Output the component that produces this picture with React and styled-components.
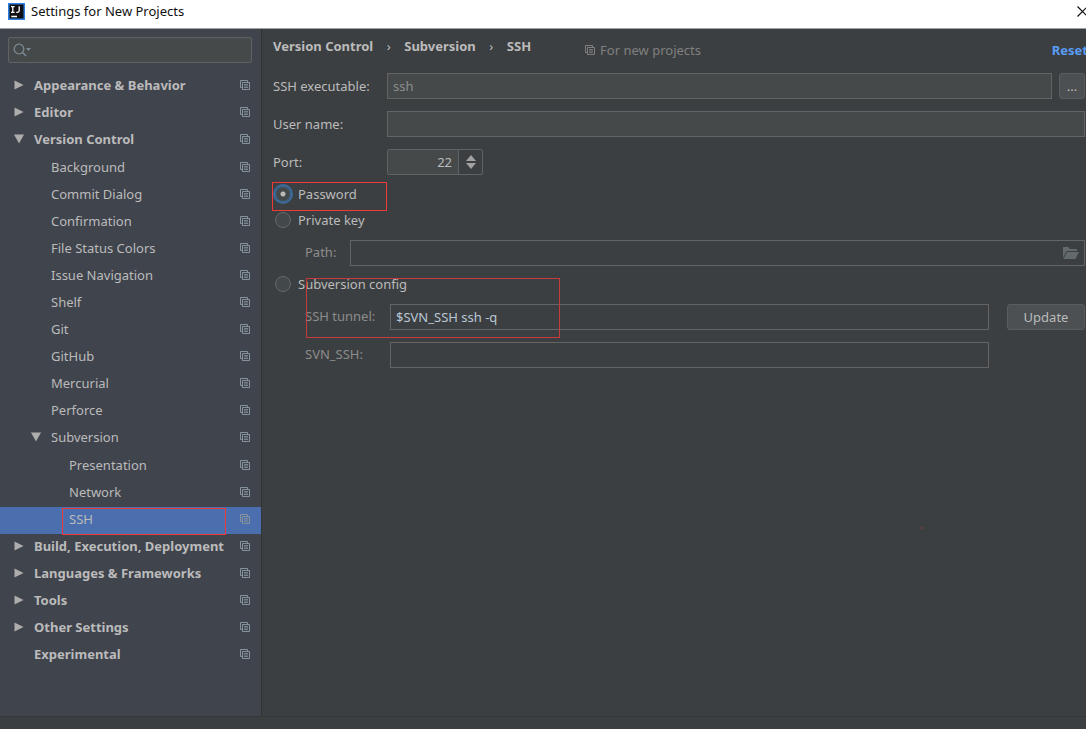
import React, { useState } from 'react';
import styled, { createGlobalStyle, css } from 'styled-components';

// Secciones del árbol de configuración
const tree = [
  { label: 'Appearance & Behavior', children: [] },
  { label: 'Editor', children: [] },
  {
    label: 'Version Control',
    open: true,
    children: [
      { label: 'Background' },
      { label: 'Commit Dialog' },
      { label: 'Confirmation' },
      { label: 'File Status Colors' },
      { label: 'Issue Navigation' },
      { label: 'Shelf' },
      { label: 'Git' },
      { label: 'GitHub' },
      { label: 'Mercurial' },
      { label: 'Perforce' },
      {
        label: 'Subversion',
        open: true,
        children: [
          { label: 'Presentation' },
          { label: 'Network' },
          { label: 'SSH', marked: true },
        ],
      },
    ],
  },
  { label: 'Build, Execution, Deployment', children: [] },
  { label: 'Languages & Frameworks', children: [] },
  { label: 'Tools', children: [] },
  { label: 'Other Settings', children: [] },
  { label: 'Experimental' },
];

function CopyIcon() {
  return (
    <svg width="10" height="10" viewBox="0 0 10 10" fill="none" stroke="currentColor" aria-hidden="true">
      <path d="M2 7.5H.5V.5H7.5V2" />
      <path d="M2.5 2.5H9.5V9.5H2.5Z" />
      <path d="M4 4.5H8M4 6H8M4 7.5H8" strokeWidth="0.8" />
    </svg>
  );
}

function Arrow({ open }) {
  return (
    <svg width="10" height="10" viewBox="0 0 10 10" fill="#adadad" aria-hidden="true">
      <path d={open ? 'M0 .5H10L5 9.5Z' : 'M.5 .5L9.5 5L.5 9.5Z'} />
    </svg>
  );
}

function TreeItem({ item, level, selected, onSelect }) {
  const isSelected = selected === item.label;
  return (
    <li>
      <TreeRow
        type="button"
        $level={level}
        $selected={isSelected}
        onClick={() => onSelect(item.label)}
      >
        <ArrowSlot>{item.children && <Arrow open={item.open} />}</ArrowSlot>
        <TreeLabel>{item.label}</TreeLabel>
        <CopyIcon />
        {item.marked && <RowMark />}
      </TreeRow>
      {item.open && (
        <NestedList>
          {item.children.map((child) => (
            <TreeItem
              key={child.label}
              item={child}
              level={level + 1}
              selected={selected}
              onSelect={onSelect}
            />
          ))}
        </NestedList>
      )}
    </li>
  );
}

function RadioOption({ value, checked, onChange, children }) {
  return (
    <RadioLabel>
      <Radio type="radio" name="auth" value={value} checked={checked} onChange={() => onChange(value)} />
      {children}
    </RadioLabel>
  );
}

export default function App() {
  const [selected, setSelected] = useState('SSH');
  const [auth, setAuth] = useState('password');
  const [port, setPort] = useState(22);

  return (
    <Window>
      <GlobalStyle />
      <TitleBar>
        <svg width="17" height="17" viewBox="0 0 17 17" aria-hidden="true">
          <rect width="17" height="17" fill="#2f7fe0" />
          <rect x="1.5" y="1.5" width="14" height="14" fill="#101014" />
          <path
            d="M3 3.7H6.6M4.8 3.7V9M3 9.3H6.6M11.200 3.200V7.5Q11.200 9.3 9.6 9.3H8.2M3.3 13.5H9"
            fill="none"
            stroke="#fff"
            strokeWidth="1.3"
          />
        </svg>
        <WindowTitle>Settings for New Projects</WindowTitle>
        <CloseButton type="button" aria-label="Close">
          <svg width="11" height="11" viewBox="0 0 11 11" stroke="#111" strokeWidth="1.2">
            <path d="M.5 .5L10.5 10.5M10.5 .5L.5 10.5" />
          </svg>
        </CloseButton>
      </TitleBar>

      <Body>
        <Sidebar>
          <SearchBox>
            <svg width="20" height="14" viewBox="0 0 20 14" fill="none" stroke="#7c8a94" aria-hidden="true">
              <circle cx="6" cy="6" r="4.8" strokeWidth="1.3" />
              <path d="M9.5 9.5L13 13" strokeWidth="1.6" />
              <path d="M13 5H18L15.500 8Z" fill="#7c8a94" stroke="none" />
            </svg>
            <SearchInput type="text" aria-label="Search settings" />
          </SearchBox>
          <TreeList>
            {tree.map((item) => (
              <TreeItem key={item.label} item={item} level={0} selected={selected} onSelect={setSelected} />
            ))}
          </TreeList>
        </Sidebar>

        <Main>
          <Header>
            <Crumbs>
              <span>Version Control</span>
              <Separator>›</Separator>
              <span>Subversion</span>
              <Separator>›</Separator>
              <span>SSH</span>
            </Crumbs>
            <Hint>
              <CopyIcon />
              For new projects
            </Hint>
            <ResetLink href="#reset">Reset</ResetLink>
          </Header>

          <Fields>
            <Field>
              <FieldLabel htmlFor="executable">SSH executable:</FieldLabel>
              <TextInput id="executable" type="text" defaultValue="ssh" $muted />
              <BrowseButton type="button" aria-label="Browse">...</BrowseButton>
            </Field>
            <Field>
              <FieldLabel htmlFor="user">User name:</FieldLabel>
              <TextInput id="user" type="text" />
            </Field>
            <Field>
              <FieldLabel htmlFor="port">Port:</FieldLabel>
              <Spinner>
                <PortInput
                  id="port"
                  type="text"
                  inputMode="numeric"
                  value={port}
                  onChange={(e) => setPort(Number(e.target.value) || 0)}
                />
                <SpinnerButtons>
                  <StepButton type="button" aria-label="Increase port" onClick={() => setPort(port + 1)}>
                    <svg width="10" height="6" viewBox="0 0 10 6" fill="#a2a2a2">
                      <path d="M0 6L5 0L10 6Z" />
                    </svg>
                  </StepButton>
                  <StepButton type="button" aria-label="Decrease port" onClick={() => setPort(port - 1)}>
                    <svg width="10" height="6" viewBox="0 0 10 6" fill="#a2a2a2">
                      <path d="M0 0L5 6L10 0Z" />
                    </svg>
                  </StepButton>
                </SpinnerButtons>
              </Spinner>
            </Field>
          </Fields>

          <Option>
            <RadioOption value="password" checked={auth === 'password'} onChange={setAuth}>
              Password
            </RadioOption>
            <PasswordMark />
          </Option>

          <Option>
            <RadioOption value="key" checked={auth === 'key'} onChange={setAuth}>
              Private key
            </RadioOption>
            <SubFields>
              <Field>
                <SubLabel htmlFor="path" $short>Path:</SubLabel>
                <PathBox>
                  <PathInput id="path" type="text" />
                  <FolderButton type="button" aria-label="Choose key file">
                    <svg width="16" height="12" viewBox="0 0 16 12" fill="#626a6d">
                      <path d="M0 0H5L7 2H14V4H3.500L0 11Z" />
                      <path d="M4 5H16L12.500 12H.5Z" />
                    </svg>
                  </FolderButton>
                </PathBox>
              </Field>
            </SubFields>
          </Option>

          <Option>
            <RadioOption value="config" checked={auth === 'config'} onChange={setAuth}>
              Subversion config
            </RadioOption>
            <SubFields>
              <Field>
                <SubLabel htmlFor="tunnel">SSH tunnel:</SubLabel>
                <TextInput id="tunnel" type="text" defaultValue="$SVN_SSH ssh -q" $disabled />
                <UpdateButton type="button">Update</UpdateButton>
              </Field>
              <Field>
                <SubLabel htmlFor="svnssh">SVN_SSH:</SubLabel>
                <TextInput id="svnssh" type="text" $disabled />
                <UpdateSpace />
              </Field>
            </SubFields>
            <ConfigMark />
          </Option>
          <Dot />
        </Main>
      </Body>
      <Footer />
    </Window>
  );
}

// --- Estilos ---
const GlobalStyle = createGlobalStyle`
  * {
    box-sizing: border-box;
  }
  body {
    margin: 0;
    background: #3c3f41;
    color: #bbbbbb;
    font-family: 'Noto Sans', 'Open Sans', sans-serif;
    font-size: 13px;
    line-height: 18px;
  }
  button,
  input {
    font: inherit;
    color: inherit;
    margin: 0;
  }
  svg {
    display: block;
    flex: none;
  }
`;

const Window = styled.div`
  display: flex;
  flex-direction: column;
  min-height: 100vh;
  overflow: hidden;
`;

const TitleBar = styled.header`
  display: flex;
  align-items: center;
  height: 29px;
  padding: 0 0 6px 8px;
  background: #ffffff;
  color: #111111;
  border-bottom: 1px solid #a0a3a3;
`;

const WindowTitle = styled.h1`
  flex: 1;
  margin: 0 0 0 6px;
  font-size: 13px;
  font-weight: 400;
`;

const CloseButton = styled.button`
  padding: 0;
  border: none;
  background: none;
  margin-right: -2px;
`;

const Body = styled.div`
  display: flex;
  flex: 1;
`;

const Sidebar = styled.nav`
  flex: none;
  width: 262px;
  padding-top: 8px;
  background: #40444d;
  border-right: 1px solid #323435;
`;

const SearchBox = styled.div`
  display: flex;
  align-items: center;
  height: 26px;
  margin: 0 9px 10px 8px;
  padding-left: 4px;
  background: #45494a;
  border: 1px solid #606365;
  border-radius: 2px;
`;

const SearchInput = styled.input`
  flex: 1;
  min-width: 0;
  border: none;
  outline: none;
  background: none;
`;

const TreeList = styled.ul`
  margin: 0;
  padding: 0;
  list-style: none;
`;

const NestedList = styled(TreeList)`
  padding-top: 1px;
`;

const TreeRow = styled.button`
  position: relative;
  display: flex;
  align-items: center;
  width: 100%;
  height: 27px;
  padding: 0 11px 4px ${({ $level }) => [14, 31, 49][$level]}px;
  border: none;
  text-align: left;
  background: ${({ $selected }) => ($selected ? '#4b6eaf' : 'transparent')};
  font-weight: ${({ $level }) => ($level === 0 ? 700 : 400)};

  & > svg {
    color: #87939a;
  }
`;

const ArrowSlot = styled.span`
  flex: none;
  width: 20px;
`;

const TreeLabel = styled.span`
  flex: 1;
  white-space: nowrap;
`;

const Main = styled.main`
  position: relative;
  flex: 1;
  min-width: 0;
  padding: 8px 1px 20px 11px;
  overflow: hidden;
`;

const Header = styled.div`
  display: flex;
  align-items: center;
  height: 26px;
  margin-bottom: 10px;
`;

const Crumbs = styled.div`
  display: flex;
  margin-bottom: 8px;
  font-weight: 700;
`;

const Separator = styled.span`
  width: 31px;
  text-align: center;
  font-weight: 400;
`;

const Hint = styled.div`
  display: flex;
  align-items: center;
  gap: 5px;
  margin-left: 54px;
  color: #808080;
`;

const ResetLink = styled.a`
  margin: 0 -3px 0 auto;
  color: #589df6;
  font-weight: 700;
  text-decoration: none;
`;

const Fields = styled.div`
  display: flex;
  flex-direction: column;
  gap: 12px;
  margin-bottom: 7px;
`;

const Field = styled.div`
  display: flex;
  align-items: center;
`;

const FieldLabel = styled.label`
  flex: none;
  width: 114px;
`;

const SubLabel = styled.label`
  flex: none;
  width: ${({ $short }) => ($short ? 45 : 85)}px;
  padding-bottom: 2px;
  color: #8c8c8c;
`;

const fieldBox = css`
  flex: 1;
  min-width: 0;
  height: 26px;
  border: 1px solid #646464;
  outline: none;
`;

const TextInput = styled.input`
  ${fieldBox}
  padding: 0 5px 1px;
  background: ${({ $disabled }) => ($disabled ? '#3c3f41' : '#45494a')};
  color: ${({ $muted }) => ($muted ? '#8c8c8c' : '#b9c7d5')};
`;

const Button = styled.button`
  flex: none;
  height: 26px;
  padding: 0;
  border: 1px solid #5a5d5f;
  border-radius: 3px;
  background: #4c5052;
`;

const BrowseButton = styled(Button)`
  width: 26px;
  margin-left: 7px;
`;

const UpdateButton = styled(Button)`
  width: 78px;
  margin-left: 18px;
`;

// Hueco bajo el botón para que los dos campos terminen igual
const UpdateSpace = styled.span`
  flex: none;
  width: 96px;
`;

const Spinner = styled.div`
  display: flex;
  width: 96px;
  height: 26px;
  border: 1px solid #606365;
  border-radius: 2px;
`;

const PortInput = styled.input`
  flex: 1;
  min-width: 0;
  padding: 0 6px;
  border: none;
  outline: none;
  background: #45494a;
  text-align: right;
`;

const SpinnerButtons = styled.div`
  display: flex;
  flex-direction: column;
  align-items: center;
  justify-content: center;
  gap: 2px;
  width: 24px;
  border-left: 1px solid #606365;
`;

const StepButton = styled.button`
  padding: 0;
  border: none;
  background: none;
`;

const Option = styled.div`
  position: relative;
`;

const RadioLabel = styled.label`
  display: inline-flex;
  align-items: center;
  gap: 7px;
  height: 26px;
  padding: 0 0 2px 2px;
`;

const Radio = styled.input`
  appearance: none;
  width: 16px;
  height: 16px;
  border: 1px solid #63676a;
  border-radius: 50%;
  background: #43494a;
  outline: none;

  &:checked {
    border-color: #3d6a99;
    background: radial-gradient(circle, #bbbbbb 0 2px, #43494a 3px);
    box-shadow: 0 0 0 2px #3d6a99;
  }
`;

const SubFields = styled.div`
  display: flex;
  flex-direction: column;
  gap: 12px;
  padding: 6px 0 6px 32px;
`;

const PathBox = styled.div`
  ${fieldBox}
  display: flex;
  align-items: center;
  padding-right: 5px;
`;

const PathInput = styled.input`
  flex: 1;
  min-width: 0;
  border: none;
  outline: none;
  background: none;
`;

const FolderButton = styled.button`
  padding: 0;
  border: none;
  background: none;
`;

// Marcas rojas sobre las opciones que hay que revisar
const Mark = styled.span`
  position: absolute;
  border: 1px solid #f03a3a;
  pointer-events: none;
`;

const RowMark = styled(Mark)`
  top: 1px;
  bottom: -1px;
  left: 62px;
  right: 35px;
  z-index: 1;
`;

const PasswordMark = styled(Mark)`
  top: 0;
  left: -1px;
  width: 115px;
  height: 29px;
`;

const ConfigMark = styled(Mark)`
  top: 6px;
  left: 33px;
  width: 254px;
  height: 60px;
  border-color: #c83a3b;
`;

const Dot = styled.span`
  position: absolute;
  top: 498px;
  right: 163px;
  width: 2px;
  height: 2px;
  background: #7c3737;
`;

const Footer = styled.footer`
  height: 13px;
  border-top: 1px solid #353739;
`;
